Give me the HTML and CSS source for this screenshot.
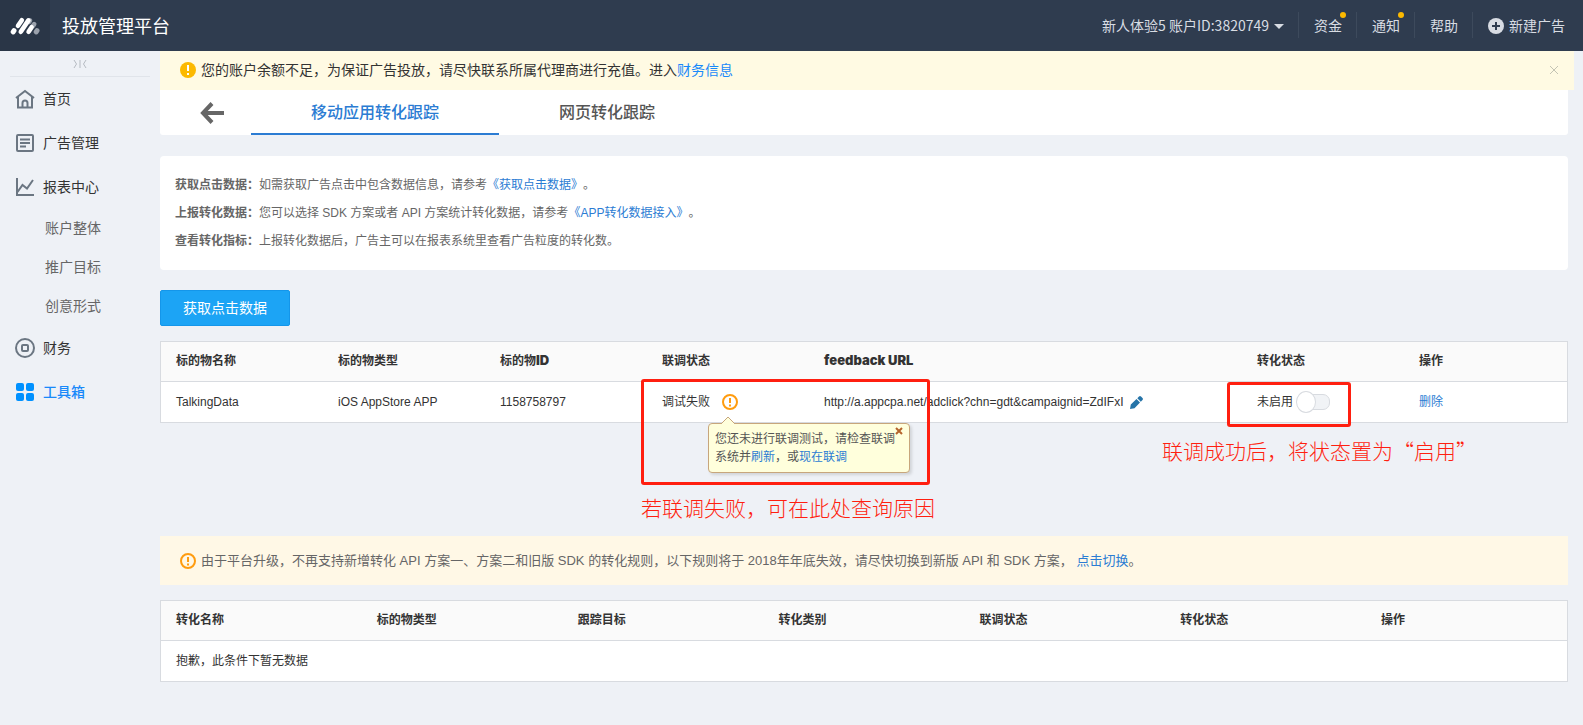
FILE: index.html
```html
<!DOCTYPE html>
<html lang="zh-CN">
<head>
<meta charset="utf-8">
<title>投放管理平台</title>
<link rel="stylesheet" href="styles.css">
</head>
<body>
<header class="topbar">
  <a class="logo" href="#" aria-label="首页">
    <svg width="30" height="18" viewBox="0 0 30 18" fill="none" stroke-linecap="round" stroke-width="4.6">
      <path d="M3.200 14.800l.8-1.200" stroke="#fff" stroke-width="5"/>
      <path d="M8 8.800l3.800-5.600" stroke="#fff"/>
      <path d="M23 8.800l1.200-1.700M20 3.400l-1 1.500" stroke="#9aa1ac"/>
      <path d="M10.800 14.800l7.600-11.400" stroke="#fff"/>
      <path d="M18.600 14.800l3-4.600" stroke="#fff"/>
      <path d="M26.200 14.800l.8-1.200" stroke="#9aa1ac" stroke-width="5"/>
    </svg>
  </a>
  <h1 class="brand">投放管理平台</h1>
  <nav class="topnav">
    <button class="account" type="button">新人体验5 账户ID:3820749<span class="caret"></span></button>
    <a class="toplink dotted" href="#">资金</a>
    <a class="toplink dotted" href="#">通知</a>
    <a class="toplink" href="#">帮助</a>
    <a class="toplink create" href="#">
      <svg width="16" height="16" viewBox="0 0 16 16"><circle cx="8" cy="8" r="8" fill="#d8dce3"/><path d="M8 4v8M4 8h8" stroke="#2f3c4f" stroke-width="2"/></svg>新建广告</a>
  </nav>
</header>
<div class="layout">
  <aside class="sidebar">
    <button class="collapse" type="button" aria-label="收起">
      <svg width="14" height="8" viewBox="0 0 14 8" fill="none" stroke="#b5bac1"><path d="M1 0l2.500 4L1 8M7 0v8M13 0l-2.500 4L13 8"/></svg>
    </button>
    <nav class="menu">
      <a class="item" href="#"><svg class="icon" viewBox="0 0 20 20"><path d="M1 9L10 2l9 7M3 8v10.500h14V8M7.500 18v-4a2.500 2.500 0 0 1 5 0v4"/></svg>首页</a>
      <a class="item" href="#"><svg class="icon" viewBox="0 0 20 20"><rect x="2" y="2" width="16" height="16" rx="1"/><path d="M5 6.500h10M5 10h10M5 13.500h6"/></svg>广告管理</a>
      <a class="item" href="#"><svg class="icon" viewBox="0 0 20 20"><path d="M2 1v17h17M2.500 15l5-7 4.500 3.500L18 3"/></svg>报表中心</a>
      <a class="item sub" href="#">账户整体</a>
      <a class="item sub" href="#">推广目标</a>
      <a class="item sub" href="#">创意形式</a>
      <a class="item" href="#"><svg class="icon" viewBox="0 0 20 20"><circle cx="10" cy="10" r="9"/><rect x="7" y="7" width="6" height="6" rx="1"/></svg>财务</a>
      <a class="item active" href="#"><svg class="icon solid" viewBox="0 0 20 20"><rect x="1" y="1" width="8" height="8" rx="2"/><rect x="11" y="1" width="8" height="8" rx="2"/><rect x="1" y="11" width="8" height="8" rx="2"/><rect x="11" y="11" width="8" height="8" rx="2"/></svg>工具箱</a>
    </nav>
  </aside>
  <main class="content">
    <div class="alert">
      <svg width="16" height="16" viewBox="0 0 16 16"><circle cx="8" cy="8" r="8" fill="#fcb900"/><path d="M8 3v6M8 11v2" stroke="#fff" stroke-width="2"/></svg>
      <p class="alert-text">您的账户余额不足，为保证广告投放，请尽快联系所属代理商进行充值。进入<a href="#">财务信息</a></p>
      <button class="alert-close" type="button" aria-label="关闭">
        <svg width="10" height="10" viewBox="0 0 10 10" stroke="#c4c4b4"><path d="M1 1l8 8M9 1L1 9"/></svg>
      </button>
    </div>
    <div class="tabs">
      <button class="back" type="button" aria-label="返回">
        <svg width="24" height="22" viewBox="0 0 24 22" fill="none" stroke="#666" stroke-width="4"><path d="M12 1.500L3 11l9 9.500M3 11h21"/></svg>
      </button>
      <a class="tab current" href="#">移动应用转化跟踪</a>
      <a class="tab" href="#">网页转化跟踪</a>
    </div>
    <section class="guide">
      <p><b>获取点击数据：</b>如需获取广告点击中包含数据信息，请参考<a href="#">《获取点击数据》</a>。</p>
      <p><b>上报转化数据：</b>您可以选择 SDK 方案或者 API 方案统计转化数据，请参考<a href="#">《APP转化数据接入》</a>。</p>
      <p><b>查看转化指标：</b>上报转化数据后，广告主可以在报表系统里查看广告粒度的转化数。</p>
    </section>
    <button class="primary" type="button">获取点击数据</button>
    <table class="grid">
      <colgroup><col class="c"><col class="c"><col class="c"><col class="c"><col><col class="c"><col class="c-last"></colgroup>
      <thead>
        <tr><th>标的物名称</th><th>标的物类型</th><th>标的物<span class="heavy">ID</span></th><th>联调状态</th><th><span class="heavy">feedback URL</span></th><th>转化状态</th><th>操作</th></tr>
      </thead>
      <tbody>
        <tr>
          <td>TalkingData</td>
          <td>iOS AppStore APP</td>
          <td>1158758797</td>
          <td class="anchor">
            <div class="inline status">调试失败
              <svg width="16" height="16" viewBox="0 0 16 16" fill="none" stroke="#ff9c0f"><circle cx="8" cy="8" r="7" stroke-width="2"/><path d="M8 4v5M8 10.500v2" stroke-width="2"/></svg>
            </div>
            <div class="tip" role="tooltip">
              <svg class="tip-arrow" width="16" height="8" viewBox="0 0 16 8"><path d="M1 8l7-7 7 7" fill="#ffffdc" stroke="#c7a67c"/></svg>
              <p>您还未进行联调测试，请检查联调</p>
              <p>系统并<a href="#">刷新</a>，或<a href="#">现在联调</a></p>
              <button class="tip-close" type="button" aria-label="关闭">
                <svg width="8" height="8" viewBox="0 0 8 8" stroke="#b5642c" stroke-width="2"><path d="M1 1l6 6M7 1L1 7"/></svg>
              </button>
            </div>
            <div class="mark mark-fail"></div>
            <p class="note note-fail">若联调失败，可在此处查询原因</p>
          </td>
          <td>
            <div class="inline url">http://a.appcpa.net/adclick?chn=gdt&amp;campaignid=ZdIFxI
              <button class="edit" type="button" aria-label="编辑">
                <svg width="13" height="13" viewBox="0 0 13 13" fill="#2674a8"><path d="M0 13l.8-4.500L6.500 3l3.500 3.500L4.500 12.200zM7.300 2.200L9 .5a1.500 1.500 0 0 1 2 0L12.500 2a1.500 1.500 0 0 1 0 2l-1.700 1.700z"/></svg>
              </button>
            </div>
          </td>
          <td class="anchor">
            <label class="inline switch">未启用<input type="checkbox"></label>
            <div class="mark mark-switch"></div>
            <p class="note note-switch">联调成功后，将状态置为“启用”</p>
          </td>
          <td><a href="#">删除</a></td>
        </tr>
      </tbody>
    </table>
    <div class="upgrade">
      <svg width="16" height="16" viewBox="0 0 16 16" fill="none" stroke="#ff9c0f"><circle cx="8" cy="8" r="7" stroke-width="2"/><path d="M8 4v5M8 10.500v2" stroke-width="2"/></svg>
      <p>由于平台升级，不再支持新增转化 API 方案一、方案二和旧版 SDK 的转化规则，以下规则将于 2018年年底失效，请尽快切换到新版 API 和 SDK 方案， <a href="#">点击切换</a>。</p>
    </div>
    <table class="grid">
      <thead>
        <tr><th>转化名称</th><th>标的物类型</th><th>跟踪目标</th><th>转化类别</th><th>联调状态</th><th>转化状态</th><th>操作</th></tr>
      </thead>
      <tbody>
        <tr><td colspan="7">抱歉，此条件下暂无数据</td></tr>
      </tbody>
    </table>
  </main>
</div>
</body>
</html>
```

FILE: styles.css
```css
* { box-sizing: border-box; }

body {
  margin: 0;
  min-height: 100vh;
  background: #eef1f6;
  color: #333;
  font: 12px/18px "Liberation Sans", "Noto Sans CJK SC", sans-serif;
  text-spacing-trim: space-all;
}

p, h1 { margin: 0; }
a { color: #2b7cd3; text-decoration: none; }
button { margin: 0; padding: 0; border: 0; background: none; color: inherit; font: inherit; }
svg { display: block; flex: none; }

.topbar {
  display: flex;
  align-items: center;
  height: 51px;
  padding: 0 18px 2px 0;
  background: #2f3c4f;
  color: #d8dce3;
  font-family: "Noto Sans CJK SC", sans-serif;
}
.logo {
  display: flex;
  align-items: center;
  justify-content: center;
  align-self: flex-start;
  width: 50px;
  height: 51px;
  background: #2a3647;
}
.brand { margin-left: 12px; color: #fff; font-size: 18px; font-weight: 400; line-height: 26px; }
.topnav { display: flex; align-items: center; margin-left: auto; font-size: 14px; line-height: 26px; }
.account { display: flex; align-items: center; gap: 5px; padding-right: 14px; }
.caret { border: 5px solid transparent; border-top-color: #d8dce3; border-bottom: 0; margin-top: 4px; }
.toplink {
  position: relative;
  display: flex;
  align-items: center;
  gap: 5px;
  padding: 0 14px 0 15px;
  border-left: 1px solid #3d4a5c;
  color: #d8dce3;
}
.create { padding-right: 0; }
.create svg { margin-top: 2px; }
.dotted::after {
  content: "";
  position: absolute;
  top: 0;
  right: 10px;
  width: 6px;
  height: 6px;
  border-radius: 50%;
  background: #fcb900;
}

.layout { display: flex; }
.sidebar { flex: none; width: 160px; }
.collapse {
  display: flex;
  align-items: center;
  justify-content: center;
  width: 140px;
  height: 26px;
  margin-left: 10px;
  border-bottom: 1px solid #e0e4ea;
}
.menu {
  font-family: "Noto Sans CJK SC", sans-serif;
  font-size: 14px;
}
.item { display: flex; align-items: center; gap: 8px; height: 44px; padding: 0 0 2px 15px; color: #333; }
.sub { height: 39px; padding: 0 0 4px 45px; color: #666; }
.active { color: #1989fa; font-weight: 500; }
.icon { width: 20px; height: 20px; margin-top: 2px; fill: none; stroke: #6b7682; stroke-width: 2; }
.solid { fill: #0091ff; stroke: none; }

.content { flex: 1; min-width: 0; padding-right: 15px; }
.alert {
  display: flex;
  align-items: center;
  gap: 5px;
  height: 39px;
  margin-right: -6px;
  padding: 0 15px 2px 20px;
  background: #fffae3;
  font-size: 14px;
}
.alert a { color: #1989fa; }
.alert-close { margin-left: auto; }

.tabs {
  display: flex;
  align-items: center;
  height: 45px;
  padding-left: 40px;
  border-radius: 0 0 3px 3px;
  background: #fff;
}
.back { margin-right: 27px; }
.tab {
  height: 45px;
  padding: 0 60px;
  border-bottom: 2px solid transparent;
  color: #555;
  font-size: 16px;
  font-weight: 500;
  line-height: 46px;
}
.current { border-color: #2b7cd3; color: #2b7cd3; }

.guide {
  margin-top: 21px;
  padding: 15px;
  border-radius: 4px;
  background: #fff;
  color: #666;
  line-height: 28px;
}

.primary {
  display: block;
  width: 130px;
  height: 36px;
  margin: 20px 0 15px;
  border: 1px solid #1496ea;
  border-radius: 2px;
  background: #1ca4f5;
  color: #fff;
  font-size: 14px;
}

.grid {
  width: 100%;
  border: 1px solid #d8dbe0;
  border-spacing: 0;
  table-layout: fixed;
  background: #fff;
}
.c { width: 162px; }
.c-last { width: 163px; }
.grid th, .grid td { height: 40px; padding: 0 15px; text-align: left; }
.grid th { padding-bottom: 2px; border-bottom: 1px solid #d8dbe0; background: #fafafa; }
.heavy { font-family: Inter, sans-serif; font-size: 13px; font-weight: 900; }
.inline { display: flex; align-items: center; }
.status { gap: 12px; }
.url { gap: 6px; }
.anchor { position: relative; }

.switch { gap: 3px; }
.switch input {
  appearance: none;
  display: flex;
  align-items: center;
  width: 34px;
  height: 20px;
  margin: 0;
}
.switch input::before {
  content: "";
  z-index: 1;
  width: 20px;
  height: 20px;
  border: 1px solid #d8dbe0;
  border-radius: 50%;
  background: #fff;
}
.switch input::after {
  content: "";
  width: 24px;
  height: 14px;
  margin-left: -10px;
  border: 1px solid #d8dbe0;
  border-radius: 7px;
  background: #f1f3f6;
}

.tip {
  position: absolute;
  top: 41px;
  left: 61px;
  width: 202px;
  height: 50px;
  padding: 6px;
  border: 1px solid #c7a67c;
  border-radius: 4px;
  background: #ffffdc;
  box-shadow: 2px 2px 3px rgba(0, 0, 0, .12);
  color: #555;
  white-space: nowrap;
}
.tip-arrow { position: absolute; top: -8px; left: 11px; }
.tip-close { position: absolute; top: 3px; right: 6px; }

.mark { position: absolute; border: 3px solid #ff1f10; border-radius: 3px; }
.mark-fail { top: -3px; left: -6px; width: 289px; height: 106px; }
.mark-switch { top: 0; left: -15px; width: 124px; height: 45px; }
.note { position: absolute; color: #ff1f10; font-family: "Noto Sans CJK SC", sans-serif; font-size: 21px; font-weight: 300; line-height: 30px; white-space: nowrap; }
.note-fail { top: 110px; left: -6px; }
.note-switch { top: 53px; left: -80px; }

.upgrade {
  display: flex;
  align-items: center;
  gap: 5px;
  min-height: 49px;
  margin: 113px 0 15px;
  padding: 0 20px;
  background: #fff8e6;
  color: #666;
  font-size: 13px;
}
```
